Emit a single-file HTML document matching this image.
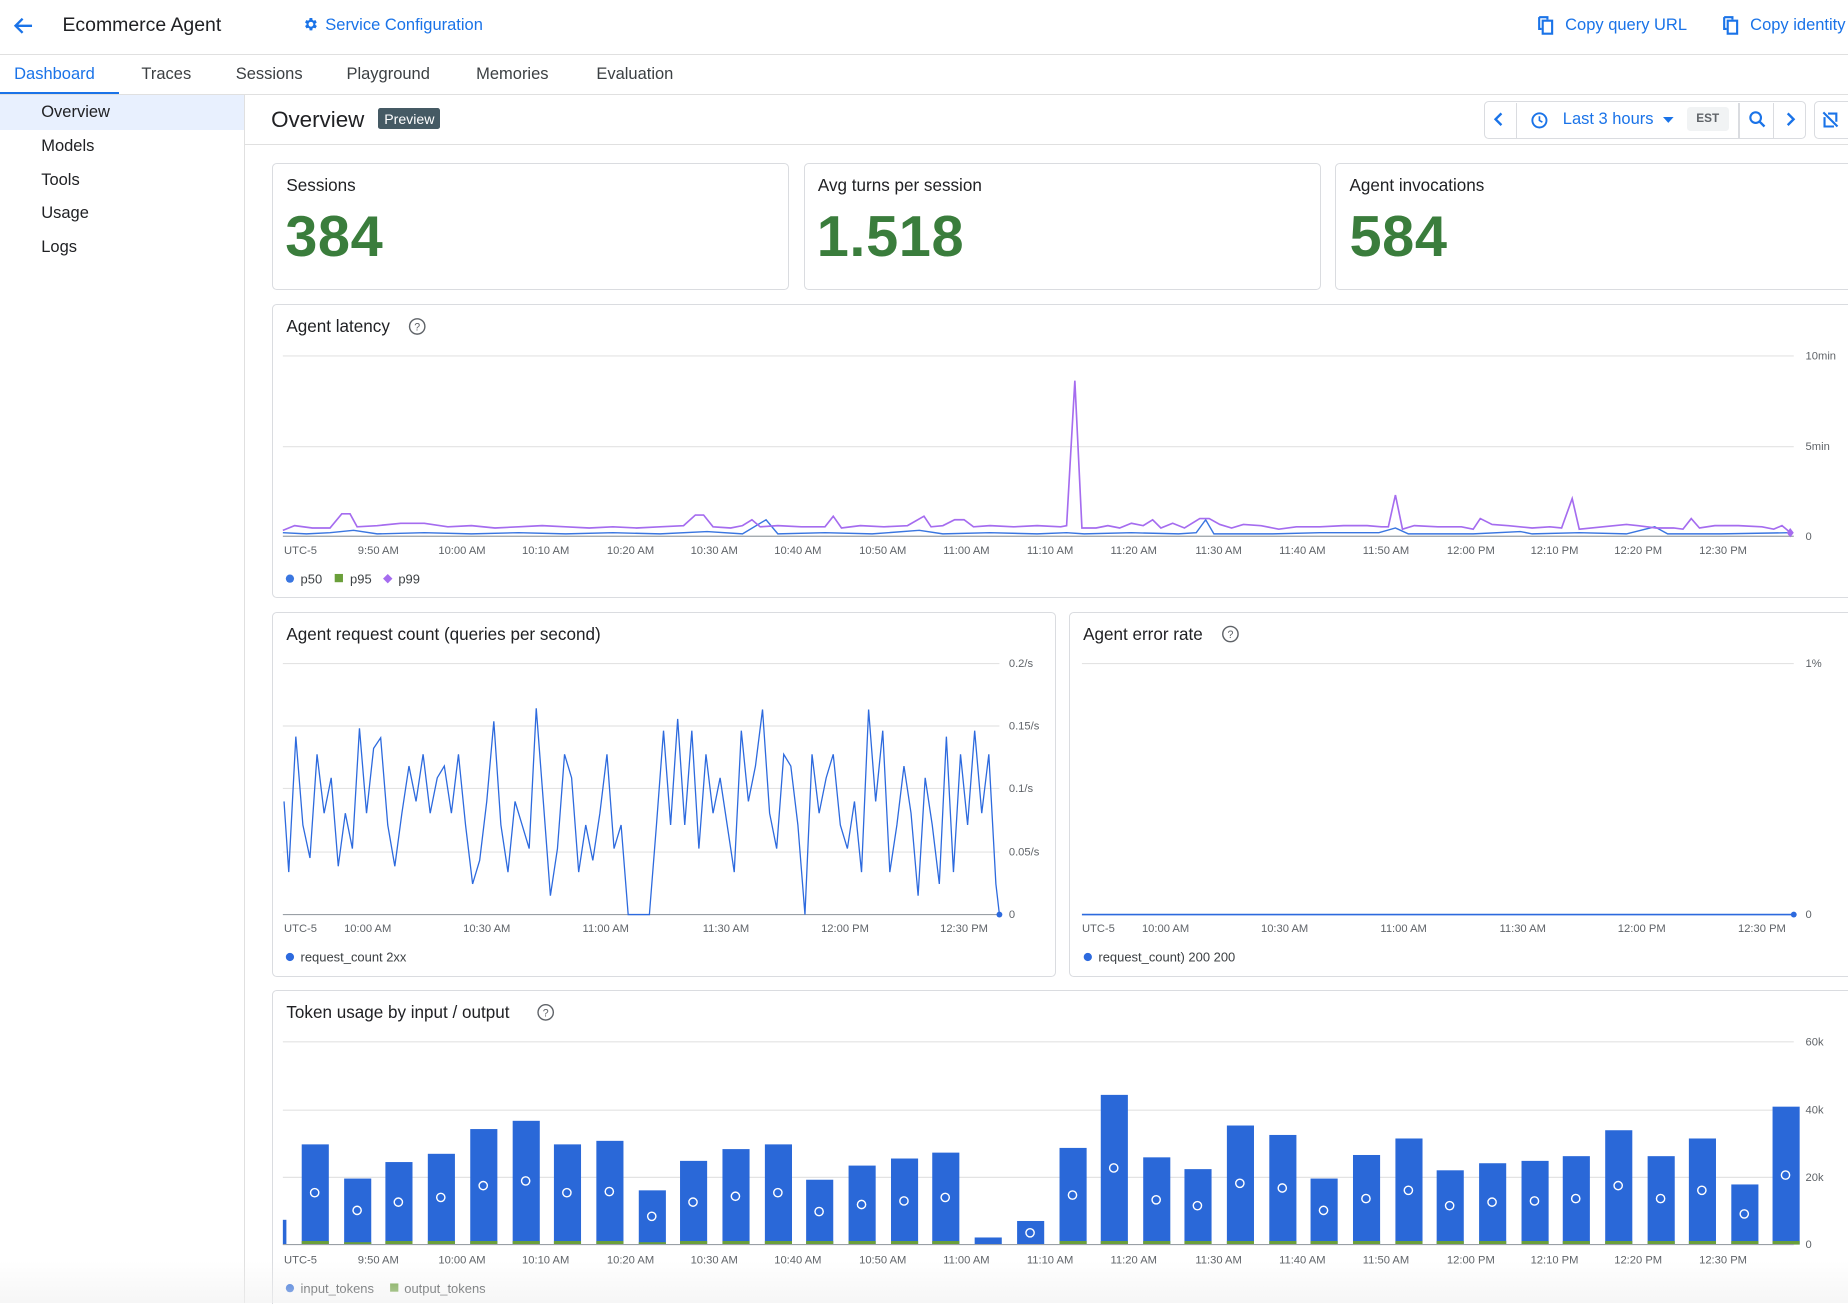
<!DOCTYPE html>
<html><head><meta charset="utf-8">
<style>
html{zoom:1.17857;overflow:hidden;height:1106px}
body{margin:0;width:1568px;height:1106px;overflow:hidden;background:#fff;font-family:"Liberation Sans",sans-serif;color:#202124;position:relative}
.abs{position:absolute}
.card{position:absolute;border:1px solid #dadce0;border-radius:4px;background:#fff}
.blue{color:#1a73e8}
.tab{position:absolute;top:55px;font-size:14px;color:#3c4043}
.side{position:absolute;left:35px;font-size:14px;color:#202124}
.ct{position:absolute;font-size:14.5px;color:#202124}
.big{position:absolute;font-size:49px;color:#3a7d3c;font-weight:bold;letter-spacing:0.5px}
svg text{font-family:"Liberation Sans",sans-serif}
</style></head><body>
<svg class="abs" style="left:10px;top:12px" width="20" height="20" viewBox="0 0 20 20"><path d="M17 10H4M9 4l-6 6 6 6" stroke="#1a73e8" stroke-width="2" fill="none"/></svg>
<div class="abs" style="left:53px;top:12px;font-size:16.5px">Ecommerce Agent</div>
<svg class="abs" style="left:256px;top:14px" width="14" height="14" viewBox="0 0 24 24"><path fill="#1a73e8" d="M19.4 13a7.5 7.5 0 000-2l2.1-1.6-2-3.5-2.5 1a7 7 0 00-1.7-1L15 3h-4l-.4 2.9a7 7 0 00-1.7 1l-2.5-1-2 3.5L6.6 11a7.5 7.5 0 000 2l-2.1 1.6 2 3.5 2.5-1a7 7 0 001.7 1L11 21h4l.4-2.9a7 7 0 001.7-1l2.5 1 2-3.5zM13 15.5a3.5 3.5 0 110-7 3.5 3.5 0 010 7z"/></svg>
<div class="abs blue" style="left:276px;top:14px;font-size:14px">Service Configuration</div>
<svg class="abs" style="left:1305px;top:14px" width="14" height="16" viewBox="0 0 14 16"><path d="M1 1h7v2M1 1v10h2M4 4h8v11H4z" stroke="#1a73e8" stroke-width="1.8" fill="none"/></svg>
<div class="abs blue" style="left:1328px;top:14px;font-size:14px">Copy query URL</div>
<svg class="abs" style="left:1462px;top:14px" width="14" height="16" viewBox="0 0 14 16"><path d="M1 1h7v2M1 1v10h2M4 4h8v11H4z" stroke="#1a73e8" stroke-width="1.8" fill="none"/></svg>
<div class="abs blue" style="left:1485px;top:14px;font-size:14px;white-space:nowrap">Copy identity</div>
<div class="abs" style="left:0;top:46px;width:1568px;height:1px;background:#e0e0e0"></div>
<div class="tab" style="left:12px;color:#1a73e8">Dashboard</div>
<div class="abs" style="left:0;top:78px;width:101px;height:2px;background:#1a73e8"></div>
<div class="tab" style="left:120px">Traces</div>
<div class="tab" style="left:200px">Sessions</div>
<div class="tab" style="left:294px">Playground</div>
<div class="tab" style="left:404px">Memories</div>
<div class="tab" style="left:506px">Evaluation</div>
<div class="abs" style="left:0;top:80px;width:1568px;height:1px;background:#e0e0e0"></div>
<div class="abs" style="left:0;top:81px;width:207px;height:29px;background:#e8f0fe"></div>
<div class="abs" style="left:207px;top:81px;width:1px;height:1025px;background:#e0e0e0"></div>
<div class="side" style="top:87px">Overview</div>
<div class="side" style="top:116px">Models</div>
<div class="side" style="top:145px">Tools</div>
<div class="side" style="top:173px">Usage</div>
<div class="side" style="top:202px">Logs</div>
<div class="abs" style="left:230px;top:91px;font-size:19px">Overview</div>
<div class="abs" style="left:321px;top:92px;background:#455a64;color:#fff;font-size:12px;padding:2px 5px;border-radius:2px">Preview</div>
<div class="abs" style="left:208px;top:122px;width:1360px;height:1px;background:#e0e0e0"></div>
<div class="abs" style="left:1259px;top:86px;width:272px;height:30px;border:1px solid #dadce0;border-radius:4px"></div>
<div class="abs" style="left:1286px;top:87px;width:1px;height:30px;background:#dadce0"></div>
<div class="abs" style="left:1475px;top:87px;width:1px;height:30px;background:#dadce0"></div>
<div class="abs" style="left:1504px;top:87px;width:1px;height:30px;background:#dadce0"></div>
<svg class="abs" style="left:1266px;top:94px" width="12" height="14"><path d="M8 2L3 7l5 5" stroke="#1a73e8" stroke-width="2" fill="none"/></svg>
<svg class="abs" style="left:1298px;top:94px" width="16" height="16"><circle cx="8" cy="8" r="6" stroke="#1a73e8" stroke-width="1.6" fill="none"/><path d="M8 4.5V8l2.5 1.5" stroke="#1a73e8" stroke-width="1.4" fill="none"/></svg>
<div class="abs blue" style="left:1326px;top:93px;font-size:14px">Last 3 hours</div>
<svg class="abs" style="left:1411px;top:99px" width="10" height="6"><path d="M0 0h9L4.5 5z" fill="#1a73e8"/></svg>
<div class="abs" style="left:1431px;top:91px;width:36px;height:20px;background:#f1f3f4;border-radius:3px;font-size:10px;font-weight:bold;color:#5f6368;text-align:center;line-height:20px">EST</div>
<svg class="abs" style="left:1483px;top:93px" width="16" height="16"><circle cx="6.5" cy="6.5" r="4.5" stroke="#1a73e8" stroke-width="1.8" fill="none"/><path d="M10 10l4 4" stroke="#1a73e8" stroke-width="2"/></svg>
<svg class="abs" style="left:1513px;top:94px" width="12" height="14"><path d="M4 2l5 5-5 5" stroke="#1a73e8" stroke-width="2" fill="none"/></svg>
<div class="abs" style="left:1539px;top:86px;width:32px;height:30px;border:1px solid #dadce0;border-radius:4px"></div>
<svg class="abs" style="left:1545px;top:93px" width="16" height="16"><path d="M2 2l12 12M3 6v8h8M6 3h7v7" stroke="#1a73e8" stroke-width="1.8" fill="none"/></svg>
<div class="card" style="left:231px;top:138px;width:437px;height:106px"></div>
<div class="card" style="left:682px;top:138px;width:437px;height:106px"></div>
<div class="card" style="left:1133px;top:138px;width:450px;height:106px"></div>
<div class="ct" style="left:243px;top:149px">Sessions</div>
<div class="ct" style="left:694px;top:149px">Avg turns per session</div>
<div class="ct" style="left:1145px;top:149px">Agent invocations</div>
<div class="big" style="left:242px;top:173px">384</div>
<div class="big" style="left:693px;top:173px">1.518</div>
<div class="big" style="left:1145px;top:173px">584</div>
<div class="card" style="left:231px;top:258px;width:1352px;height:248px"></div>
<div class="card" style="left:231px;top:519px;width:663px;height:308px"></div>
<div class="card" style="left:907px;top:519px;width:676px;height:308px"></div>
<div class="card" style="left:231px;top:840px;width:1352px;height:280px;border-bottom:none"></div>
<div class="ct" style="left:243px;top:269px">Agent latency</div>
<div class="ct" style="left:243px;top:530px">Agent request count (queries per second)</div>
<div class="ct" style="left:919px;top:530px">Agent error rate</div>
<div class="ct" style="left:243px;top:851px">Token usage by input / output</div>
<svg class="abs" style="left:0;top:0" width="1568" height="1106" viewBox="0 0 1568 1106">
<g fill="none" stroke="#5f6368" stroke-width="1.2">
<circle cx="354" cy="277" r="6.5"/><circle cx="1044" cy="538" r="6.5"/><circle cx="463" cy="859" r="6.5"/></g>
<g font-size="9" fill="#5f6368" text-anchor="middle"><text x="354" y="280.5">?</text><text x="1044" y="541.5">?</text><text x="463" y="862.5">?</text></g>
<g stroke="#e3e3e3" stroke-width="1"><path d="M240 302H1522M240 379H1522"/></g>
<path d="M240 455H1522" stroke="#9aa0a6"/>
<g font-size="9.5" fill="#5f6368"><text x="1532" y="305">10min</text><text x="1532" y="382">5min</text><text x="1532" y="458">0</text></g>
<g font-size="9.5" fill="#5f6368" text-anchor="middle">
<text x="255" y="470">UTC-5</text><text x="321" y="470">9:50 AM</text><text x="392" y="470">10:00 AM</text><text x="463" y="470">10:10 AM</text><text x="535" y="470">10:20 AM</text><text x="606" y="470">10:30 AM</text><text x="677" y="470">10:40 AM</text><text x="749" y="470">10:50 AM</text><text x="820" y="470">11:00 AM</text><text x="891" y="470">11:10 AM</text><text x="962" y="470">11:20 AM</text><text x="1034" y="470">11:30 AM</text><text x="1105" y="470">11:40 AM</text><text x="1176" y="470">11:50 AM</text><text x="1248" y="470">12:00 PM</text><text x="1319" y="470">12:10 PM</text><text x="1390" y="470">12:20 PM</text><text x="1462" y="470">12:30 PM</text>
</g>
<polyline fill="none" stroke="#3a76e0" stroke-width="1.2" points="240,452 260,453 280,452 300,450 320,453 360,452 400,453 440,452 480,453 520,452 560,453 600,451 630,453 650,441 660,453 700,452 740,453 780,450 800,453 840,452 880,453 905,452 920,453 960,452 1000,453 1015,452 1023,441 1030,453 1080,453 1120,452 1170,452 1184,448 1195,453 1250,453 1290,451 1300,453 1340,452 1380,453 1404,447 1415,453 1460,453 1518,452"/>
<polyline fill="none" stroke="#a56cef" stroke-width="1.4" points="240,450 250,446 265,448 280,448 290,436 297,436 303,447 320,446 340,444 360,444 380,447 400,446 420,448 440,447 460,446 480,447 500,448 520,447 540,448 560,447 580,446 590,437 597,437 605,447 620,448 630,446 638,441 645,447 660,446 680,447 700,447 707,438 714,448 730,446 750,447 770,446 784,438 790,447 800,446 810,441 818,441 826,447 840,446 860,447 880,446 900,447 905,446 912,323 918,448 930,448 940,446 950,448 960,444 970,446 978,441 985,448 995,444 1005,448 1018,440 1026,440 1035,445 1045,448 1055,445 1070,446 1085,449 1100,447 1120,447 1140,446 1160,446 1172,447 1178,447 1184,420 1190,449 1200,446 1220,447 1240,447 1250,449 1256,440 1266,445 1280,446 1300,448 1315,447 1325,448 1334,423 1340,449 1360,447 1380,445 1390,446 1405,448 1420,448 1428,449 1435,440 1442,448 1455,446 1475,446 1495,447 1505,449 1512,446 1518,451"/>
<path d="M1519 448l3 4-3 4-3-4z" fill="#a56cef"/>
<circle cx="246" cy="491" r="3.5" fill="#3a76e0"/><text x="255" y="495" font-size="11" fill="#3c4043">p50</text>
<rect x="284" y="487" width="7" height="7" fill="#6a9f3a"/><text x="297" y="495" font-size="11" fill="#3c4043">p95</text>
<path d="M329 487l4 4-4 4-4-4z" fill="#a56cef"/><text x="338" y="495" font-size="11" fill="#3c4043">p99</text>
<g stroke="#e3e3e3"><path d="M240 563H848M240 616H848M240 669H848M240 723H848"/></g>
<path d="M240 776H848" stroke="#9aa0a6"/>
<g font-size="9.5" fill="#5f6368"><text x="856" y="566">0.2/s</text><text x="856" y="619">0.15/s</text><text x="856" y="672">0.1/s</text><text x="856" y="726">0.05/s</text><text x="856" y="779">0</text></g>
<g font-size="9.5" fill="#5f6368" text-anchor="middle"><text x="255" y="791">UTC-5</text><text x="312" y="791">10:00 AM</text><text x="413" y="791">10:30 AM</text><text x="514" y="791">11:00 AM</text><text x="616" y="791">11:30 AM</text><text x="717" y="791">12:00 PM</text><text x="818" y="791">12:30 PM</text></g>
<polyline fill="none" stroke="#2d6ade" stroke-width="1.1" points="241,680 245,740 251,625 257,700 263,728 269,640 275,690 281,660 287,735 293,690 299,720 305,618 311,690 317,635 323,626 329,700 335,735 341,690 347,650 353,680 359,640 365,690 371,660 377,650 383,690 389,640 395,700 401,750 407,730 413,680 419,612 425,700 431,740 437,680 443,700 449,720 455,601 461,680 467,760 473,720 479,640 485,660 491,740 497,700 503,730 509,690 515,640 521,720 527,700 533,776 539,776 545,776 551,776 557,700 563,620 569,700 575,610 581,700 587,620 593,720 599,640 605,690 611,660 617,700 623,740 629,620 635,680 641,650 647,602 653,690 659,720 665,640 671,650 677,700 683,776 689,640 695,690 701,660 707,640 713,700 719,720 725,680 731,740 737,602 743,680 749,620 755,740 761,700 767,650 773,690 779,760 785,660 791,700 797,750 803,625 809,740 815,640 821,700 827,620 833,690 839,640 845,750 848,776"/>
<circle cx="848" cy="776" r="2.5" fill="#2d6ade"/>
<circle cx="246" cy="812" r="3.5" fill="#2d6ade"/><text x="255" y="816" font-size="11" fill="#3c4043">request_count 2xx</text>
<path d="M918 563H1522" stroke="#e3e3e3"/>
<path d="M918 776H1522" stroke="#2d6ade" stroke-width="1.3"/>
<circle cx="1522" cy="776" r="2.5" fill="#2d6ade"/>
<g font-size="9.5" fill="#5f6368"><text x="1532" y="566">1%</text><text x="1532" y="779">0</text></g>
<g font-size="9.5" fill="#5f6368" text-anchor="middle"><text x="932" y="791">UTC-5</text><text x="989" y="791">10:00 AM</text><text x="1090" y="791">10:30 AM</text><text x="1191" y="791">11:00 AM</text><text x="1292" y="791">11:30 AM</text><text x="1393" y="791">12:00 PM</text><text x="1495" y="791">12:30 PM</text></g>
<circle cx="923" cy="812" r="3.5" fill="#2d6ade"/><text x="932" y="816" font-size="11" fill="#3c4043">request_count) 200 200</text>
<g stroke="#e3e3e3"><path d="M240 884H1522M240 942H1522M240 999H1522"/></g>
<g font-size="9.5" fill="#5f6368"><text x="1532" y="887">60k</text><text x="1532" y="945">40k</text><text x="1532" y="1002">20k</text><text x="1532" y="1059">0</text></g>
<g fill="#2a68d8">
<rect x="240" y="1035" width="3" height="21"/>
<rect x="256" y="971" width="23" height="85"/><rect x="292" y="1000" width="23" height="56"/><rect x="327" y="986" width="23" height="70"/><rect x="363" y="979" width="23" height="77"/><rect x="399" y="958" width="23" height="98"/><rect x="435" y="951" width="23" height="105"/><rect x="470" y="971" width="23" height="85"/><rect x="506" y="968" width="23" height="88"/><rect x="542" y="1010" width="23" height="46"/><rect x="577" y="985" width="23" height="71"/><rect x="613" y="975" width="23" height="81"/><rect x="649" y="971" width="23" height="85"/><rect x="684" y="1001" width="23" height="55"/><rect x="720" y="989" width="23" height="67"/><rect x="756" y="983" width="23" height="73"/><rect x="791" y="978" width="23" height="78"/><rect x="827" y="1050" width="23" height="6"/><rect x="863" y="1036" width="23" height="20"/><rect x="899" y="974" width="23" height="82"/><rect x="934" y="929" width="23" height="127"/><rect x="970" y="982" width="23" height="74"/><rect x="1005" y="992" width="23" height="64"/><rect x="1041" y="955" width="23" height="101"/><rect x="1077" y="963" width="23" height="93"/><rect x="1112" y="1000" width="23" height="56"/><rect x="1148" y="980" width="23" height="76"/><rect x="1184" y="966" width="23" height="90"/><rect x="1219" y="993" width="23" height="63"/><rect x="1255" y="987" width="23" height="69"/><rect x="1291" y="985" width="23" height="71"/><rect x="1326" y="981" width="23" height="75"/><rect x="1362" y="959" width="23" height="97"/><rect x="1398" y="981" width="23" height="75"/><rect x="1433" y="966" width="23" height="90"/><rect x="1469" y="1005" width="23" height="51"/><rect x="1504" y="939" width="23" height="117"/>
</g>
<g fill="#6a9f3a">
<rect x="256" y="1053" width="23" height="3"/><rect x="292" y="1054" width="23" height="2"/><rect x="327" y="1053" width="23" height="3"/><rect x="363" y="1053" width="23" height="3"/><rect x="399" y="1053" width="23" height="3"/><rect x="435" y="1053" width="23" height="3"/><rect x="470" y="1053" width="23" height="3"/><rect x="506" y="1053" width="23" height="3"/><rect x="542" y="1054" width="23" height="2"/><rect x="577" y="1053" width="23" height="3"/><rect x="613" y="1053" width="23" height="3"/><rect x="649" y="1053" width="23" height="3"/><rect x="684" y="1053" width="23" height="3"/><rect x="720" y="1053" width="23" height="3"/><rect x="756" y="1053" width="23" height="3"/><rect x="791" y="1053" width="23" height="3"/><rect x="899" y="1053" width="23" height="3"/><rect x="934" y="1053" width="23" height="3"/><rect x="970" y="1053" width="23" height="3"/><rect x="1005" y="1053" width="23" height="3"/><rect x="1041" y="1053" width="23" height="3"/><rect x="1077" y="1053" width="23" height="3"/><rect x="1112" y="1053" width="23" height="3"/><rect x="1148" y="1053" width="23" height="3"/><rect x="1184" y="1053" width="23" height="3"/><rect x="1219" y="1053" width="23" height="3"/><rect x="1255" y="1053" width="23" height="3"/><rect x="1291" y="1053" width="23" height="3"/><rect x="1326" y="1053" width="23" height="3"/><rect x="1362" y="1053" width="23" height="3"/><rect x="1398" y="1053" width="23" height="3"/><rect x="1433" y="1053" width="23" height="3"/><rect x="1469" y="1053" width="23" height="3"/><rect x="1504" y="1053" width="23" height="3"/>
</g>
<g fill="none" stroke="#fff" stroke-width="1.2">
<circle cx="267" cy="1012" r="3.5"/><circle cx="303" cy="1027" r="3.5"/><circle cx="338" cy="1020" r="3.5"/><circle cx="374" cy="1016" r="3.5"/><circle cx="410" cy="1006" r="3.5"/><circle cx="446" cy="1002" r="3.5"/><circle cx="481" cy="1012" r="3.5"/><circle cx="517" cy="1011" r="3.5"/><circle cx="553" cy="1032" r="3.5"/><circle cx="588" cy="1020" r="3.5"/><circle cx="624" cy="1015" r="3.5"/><circle cx="660" cy="1012" r="3.5"/><circle cx="695" cy="1028" r="3.5"/><circle cx="731" cy="1022" r="3.5"/><circle cx="767" cy="1019" r="3.5"/><circle cx="802" cy="1016" r="3.5"/><circle cx="874" cy="1046" r="3.5"/><circle cx="910" cy="1014" r="3.5"/><circle cx="945" cy="991" r="3.5"/><circle cx="981" cy="1018" r="3.5"/><circle cx="1016" cy="1023" r="3.5"/><circle cx="1052" cy="1004" r="3.5"/><circle cx="1088" cy="1008" r="3.5"/><circle cx="1123" cy="1027" r="3.5"/><circle cx="1159" cy="1017" r="3.5"/><circle cx="1195" cy="1010" r="3.5"/><circle cx="1230" cy="1023" r="3.5"/><circle cx="1266" cy="1020" r="3.5"/><circle cx="1302" cy="1019" r="3.5"/><circle cx="1337" cy="1017" r="3.5"/><circle cx="1373" cy="1006" r="3.5"/><circle cx="1409" cy="1017" r="3.5"/><circle cx="1444" cy="1010" r="3.5"/><circle cx="1480" cy="1030" r="3.5"/><circle cx="1515" cy="997" r="3.5"/>
</g>
<path d="M240 1056H1522" stroke="#9aa0a6"/>
<g font-size="9.5" fill="#5f6368" text-anchor="middle">
<text x="255" y="1072">UTC-5</text><text x="321" y="1072">9:50 AM</text><text x="392" y="1072">10:00 AM</text><text x="463" y="1072">10:10 AM</text><text x="535" y="1072">10:20 AM</text><text x="606" y="1072">10:30 AM</text><text x="677" y="1072">10:40 AM</text><text x="749" y="1072">10:50 AM</text><text x="820" y="1072">11:00 AM</text><text x="891" y="1072">11:10 AM</text><text x="962" y="1072">11:20 AM</text><text x="1034" y="1072">11:30 AM</text><text x="1105" y="1072">11:40 AM</text><text x="1176" y="1072">11:50 AM</text><text x="1248" y="1072">12:00 PM</text><text x="1319" y="1072">12:10 PM</text><text x="1390" y="1072">12:20 PM</text><text x="1462" y="1072">12:30 PM</text>
</g>
<circle cx="246" cy="1093" r="3.5" fill="#2a68d8"/><text x="255" y="1097" font-size="11" fill="#3c4043">input_tokens</text>
<rect x="331" y="1089" width="7" height="7" fill="#6a9f3a"/><text x="343" y="1097" font-size="11" fill="#3c4043">output_tokens</text>
</svg>
<div class="abs" style="left:0;top:1070px;width:1568px;height:36px;background:linear-gradient(rgba(245,245,245,0),rgba(240,240,240,0.6))"></div>
</body></html>
